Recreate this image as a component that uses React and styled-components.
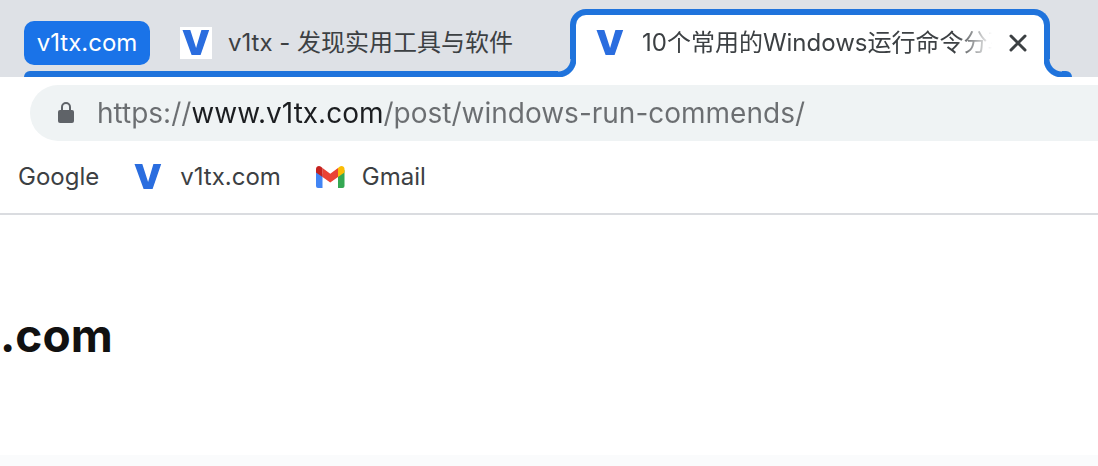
import React from "react";
import styled, { createGlobalStyle } from "styled-components";

const blue = "#1f73dc";
const strip = "#dee1e6";

const VIcon = ({ boxed }) => (
	<Icon viewBox="0 0 32 32" aria-hidden="true">
		{boxed && <rect width="32" height="32" fill="#fff" />}
		<path d="M2.5 3h7.8l5.800 18L21.400 3h7.800L20.600 28h-9z" fill="#2a6ddf" />
	</Icon>
);

const GmailIcon = () => (
	<Icon viewBox="0 0 32 32" aria-hidden="true">
		<path d="M2 9v16a2 2 0 0 0 2 2h4.500V13z" fill="#4285f4" />
		<path d="M30.500 9v16a2 2 0 0 1-2 2H24V13z" fill="#34a853" />
		<path d="M8.500 7l7.750 5.800L24 7v9l-7.750 5.500-7.750-5.500z" fill="#ea4335" />
		<path d="M2 11.500V8C2 5.200 5.100 4.200 7 5.700l1.500 1.300v9z" fill="#c5221f" />
		<path d="M30.500 11.500V8c0-2.800-3.100-3.800-5-2.300L24 7v9z" fill="#fbbc04" />
	</Icon>
);

const LockIcon = () => (
	<Lock viewBox="0 0 18 24" aria-hidden="true">
		<rect x="1" y="9" width="16" height="13" rx="2" fill="#5f6368" />
		<path d="M5 10V6a4 4 0 0 1 8 0V10" fill="none" stroke="#5f6368" strokeWidth="2" />
	</Lock>
);

const App = () => {
	return (
		<>
			<GlobalStyle />
			<TabStrip>
				<Group>
					<GroupRow>
						<Chip type="button">v1tx.com</Chip>
						<Tab type="button">
							<VIcon boxed />
							<span>v1tx - 发现实用工具与软件</span>
						</Tab>
					</GroupRow>
					<GroupLine />
				</Group>
				<ActiveTab>
					<VIcon />
					<TabTitle>10个常用的Windows运行命令分享</TabTitle>
					<Close type="button" aria-label="Close tab">
						<svg width="20" height="20" viewBox="0 0 20 20">
							<path d="M3 3l14 14M17 3L3 17" stroke="#3c4043" strokeWidth="3" strokeLinecap="round" />
						</svg>
					</Close>
				</ActiveTab>
				<GroupEnd />
			</TabStrip>
			<Toolbar>
				<AddressBar>
					<LockIcon />
					<Address
						type="text"
						aria-label="Address"
						spellCheck="false"
						defaultValue="https://www.v1tx.com/post/windows-run-commends/"
					/>
				</AddressBar>
			</Toolbar>
			<Bookmarks>
				<Bookmark href="#google">Google</Bookmark>
				<Bookmark href="#v1tx">
					<VIcon />
					v1tx.com
				</Bookmark>
				<Bookmark href="#gmail">
					<GmailIcon />
					Gmail
				</Bookmark>
			</Bookmarks>
			<Page>
				<h1>.com</h1>
			</Page>
			<PageBand />
		</>
	);
};

export default App;

const GlobalStyle = createGlobalStyle`
	* {
		box-sizing: border-box;
	}
	html {
		background: #fafbfc;
	}
	body {
		margin: 0;
		overflow: hidden;
		color: #3c4043;
		font: 24px/32px Inter, "Noto Sans CJK SC", sans-serif;
	}
	button,
	input {
		border: 0;
		padding: 0;
		background: none;
		color: inherit;
		font: inherit;
	}
`;

const Icon = styled.svg`
	flex: none;
	width: 32px;
	height: 32px;
`;

const Lock = styled.svg`
	flex: none;
	width: 18px;
	height: 24px;
`;

const TabStrip = styled.div`
	display: flex;
	align-items: flex-end;
	padding: 9px 24px 0;
	background: ${strip};
`;

const Group = styled.div`
	flex: 0 1 546px;
	min-width: 0;
`;

const GroupRow = styled.div`
	display: flex;
	align-items: center;
	gap: 30px;
	padding-bottom: 6px;
`;

const GroupLine = styled.div`
	height: 6px;
	border-top-left-radius: 6px;
	background: ${blue};
`;

const Chip = styled.button`
	flex: none;
	min-width: 126px;
	height: 44px;
	padding: 0 12px;
	border-radius: 10px;
	background: #1a73e8;
	color: #fff;
`;

const Tab = styled.button`
	display: flex;
	align-items: center;
	gap: 16px;
	white-space: nowrap;
`;

const ActiveTab = styled.div`
	position: relative;
	display: flex;
	align-items: center;
	flex: 0 1 480px;
	min-width: 0;
	height: 68px;
	padding: 0 16px 6px 18px;
	border: 6px solid ${blue};
	border-bottom: 0;
	border-radius: 16px 16px 0 0;
	background: #fff;

	/* curved feet that join the tab to the group line */
	&::before,
	&::after {
		content: "";
		position: absolute;
		bottom: 0;
		width: 18px;
		height: 18px;
	}
	&::before {
		right: 100%;
		background: radial-gradient(circle at 0 0, ${strip} 12px, ${blue} 13px, ${blue} 18px, #fff 19px);
	}
	&::after {
		left: 100%;
		background: radial-gradient(circle at 100% 0, ${strip} 12px, ${blue} 13px, ${blue} 18px, #fff 19px);
	}
`;

const TabTitle = styled.span`
	flex: 1;
	min-width: 0;
	margin: 0 12px 0 16px;
	overflow: hidden;
	white-space: nowrap;
	mask-image: linear-gradient(to left, transparent 4px, #000 40px);
`;

const Close = styled.button`
	display: flex;
	flex: none;
`;

const GroupEnd = styled.div`
	width: 22px;
	height: 6px;
	border-top-right-radius: 6px;
	background: ${blue};
`;

const Toolbar = styled.div`
	padding: 8px 0 8px 30px;
	background: #fff;
`;

const AddressBar = styled.div`
	display: flex;
	align-items: center;
	gap: 22px;
	height: 56px;
	padding-left: 27px;
	border-radius: 28px 0 0 28px;
	background: #eff3f4;
`;

/* the host part of the address is darker than the rest */
const Address = styled.input`
	flex: 1;
	min-width: 0;
	height: 40px;
	font-size: 28px;
	color: transparent;
	background: linear-gradient(to right, #6b6e71 96px, #1b1d20 96px, #1b1d20 286px, #6b6e71 286px);
	background-clip: text;
	outline: 0;
`;

const Bookmarks = styled.nav`
	display: flex;
	align-items: center;
	gap: 33px;
	height: 66px;
	padding: 0 18px 8px;
	border-bottom: 2px solid #dadce0;
	background: #fff;
`;

const Bookmark = styled.a`
	display: flex;
	align-items: center;
	gap: 16px;
	color: inherit;
	text-decoration: none;
`;

const Page = styled.main`
	padding: 88px 0;
	background: #fff;

	h1 {
		margin: 0;
		color: #111;
		font-size: 46px;
		line-height: 64px;
	}
`;

const PageBand = styled.div`
	height: 11px;
	background: #fafbfc;
`;
